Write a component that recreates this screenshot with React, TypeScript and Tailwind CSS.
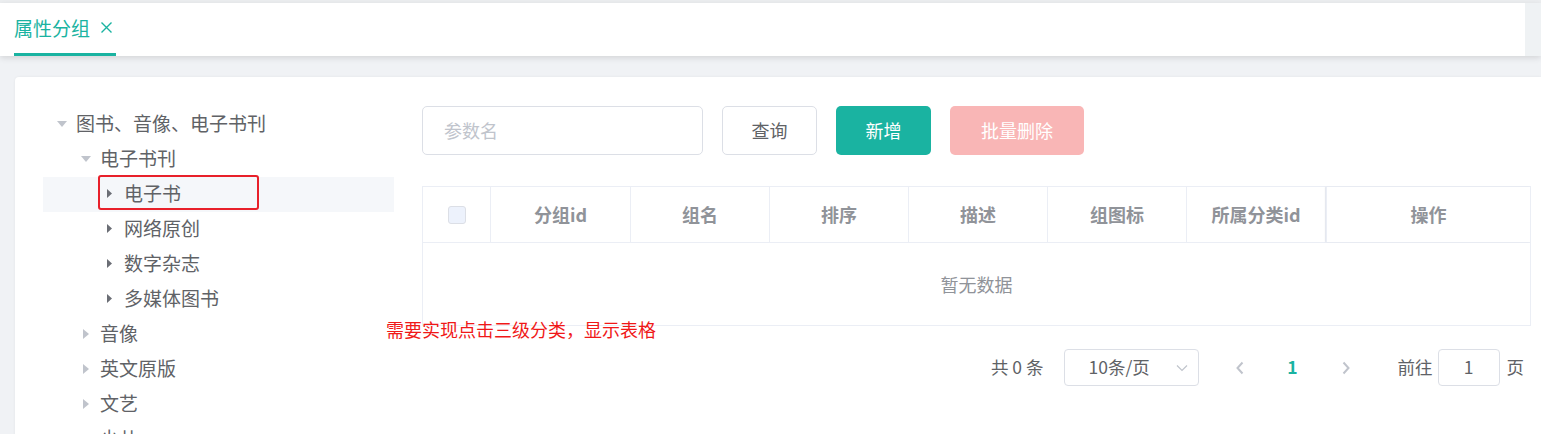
import React from "react";

const FONT = { fontFamily: '"Microsoft YaHei", "Noto Sans CJK SC", "Noto Sans", sans-serif' };

function CaretDown({ color = "#c0c4cc" }: { color?: string }) {
  return (
    <svg width="10" height="6" viewBox="0 0 10 6">
      <path d="M0 0 L10 0 L5 6 Z" fill={color} />
    </svg>
  );
}
function CaretRight({ color = "#c0c4cc", small = false }: { color?: string; small?: boolean }) {
  return small ? (
    <svg width="5" height="9" viewBox="0 0 5 9">
      <path d="M0 0 L5 4.5 L0 9 Z" fill={color} />
    </svg>
  ) : (
    <svg width="6" height="10" viewBox="0 0 6 10">
      <path d="M0 0 L6 5 L0 10 Z" fill={color} />
    </svg>
  );
}

type Node = { label: string; level: number; kind: "open" | "closed" | "leafish"; active?: boolean };

const nodes: Node[] = [
  { label: "图书、音像、电子书刊", level: 1, kind: "open" },
  { label: "电子书刊", level: 2, kind: "open" },
  { label: "电子书", level: 3, kind: "leafish", active: true },
  { label: "网络原创", level: 3, kind: "leafish" },
  { label: "数字杂志", level: 3, kind: "leafish" },
  { label: "多媒体图书", level: 3, kind: "leafish" },
  { label: "音像", level: 2, kind: "closed" },
  { label: "英文原版", level: 2, kind: "closed" },
  { label: "文艺", level: 2, kind: "closed" },
  { label: "少儿", level: 2, kind: "closed" },
];

function TreeRow({ n }: { n: Node }) {
  const indent = n.level === 1 ? "pl-[6px]" : n.level === 2 ? "pl-[30px]" : "pl-[54px]";
  return (
    <div className={`relative flex items-center h-[35px] ${indent} ${n.active ? "bg-[#f5f7fa]" : ""}`}>
      <div className="w-[25px] flex items-center justify-center shrink-0 mb-[2px]">
        {n.kind === "open" ? (
          <CaretDown />
        ) : n.kind === "closed" ? (
          <CaretRight />
        ) : (
          <CaretRight color="#6b6e75" small />
        )}
      </div>
      <span className="ml-[2px] mb-[4px] text-[19px] leading-none text-[#606266] whitespace-nowrap">{n.label}</span>
      {n.active && (
        <div className="absolute left-[55px] top-[-2px] w-[161px] h-[35px] border-2 border-[#e8202a] rounded-[3px]" />
      )}
    </div>
  );
}

const cols = [
  { w: "w-[68px]", label: "" },
  { w: "w-[140px]", label: "分组id" },
  { w: "w-[139px]", label: "组名" },
  { w: "w-[139px]", label: "排序" },
  { w: "w-[139px]", label: "描述" },
  { w: "w-[139px]", label: "组图标" },
  { w: "w-[139px]", label: "所属分类id" },
];

export default function App() {
  return (
    <div style={FONT} className="relative w-[1541px] h-[434px] overflow-hidden bg-[#f0f2f5]">
      {/* top strip */}
      <div className="h-[3px] bg-[#eceef0]" />
      {/* tab bar */}
      <div className="relative z-10 flex h-[53px] bg-white shadow-[0_2px_6px_rgba(0,0,0,0.12)]">
        <div className="flex-1 flex items-end pl-[14px]">
          <div className="flex flex-col">
            <div className="flex items-center h-[50px] pb-[2px]">
              <span className="text-[19px] leading-none text-[#1ab3a1]">属性分组</span>
              <svg className="ml-[10px]" width="13" height="13" viewBox="0 0 13 13">
                <path d="M1.5 1.5 L11.5 11.5 M11.5 1.5 L1.5 11.5" stroke="#1ab3a1" strokeWidth="1.4" />
              </svg>
            </div>
            <div className="h-[3px] w-[102px] bg-[#1ab3a1]" />
          </div>
        </div>
        <div className="w-[16px] bg-[#eff2f4]" />
      </div>

      {/* content */}
      <div className="pt-[21px] pl-[15px]">
        <div className="flex h-[400px] bg-white rounded-tl-[4px] shadow-[0_0_3px_rgba(0,0,0,0.06)]">
          {/* tree */}
          <div className="w-[351px] ml-[28px] pt-[30px] shrink-0">
            {nodes.map((n) => (
              <TreeRow key={n.label} n={n} />
            ))}
          </div>

          {/* right panel */}
          <div className="ml-[28px] w-[1109px] pt-[29px] shrink-0">
            <div className="flex items-center h-[49px]">
              <div className="w-[281px] h-[49px] border border-[#dcdfe6] rounded-[5px] flex items-center pl-[21px]">
                <span className="text-[18px] text-[#c0c4cc]">参数名</span>
              </div>
              <div className="ml-[19px] w-[95px] h-[49px] border border-[#dcdfe6] rounded-[5px] flex items-center justify-center text-[18px] text-[#606266]">
                查询
              </div>
              <div className="ml-[19px] w-[95px] h-[49px] rounded-[5px] bg-[#1ab3a1] flex items-center justify-center text-[18px] text-white">
                新增
              </div>
              <div className="ml-[19px] w-[134px] h-[49px] rounded-[5px] bg-[#f9b6b6] flex items-center justify-center text-[18px] text-white">
                批量删除
              </div>
            </div>

            {/* table */}
            <div className="mt-[31px] border border-[#ebeef5]">
              <div className="flex h-[56px] border-b border-[#ebeef5]">
                {cols.map((c, i) => (
                  <div
                    key={i}
                    className={`${c.w} shrink-0 flex items-center justify-center border-r border-[#ebeef5] text-[18px] font-bold text-[#909399]`}
                  >
                    {i === 0 ? (
                      <div className="w-[18px] h-[18px] rounded-[3px] border border-[#dcdfe6] bg-[#edf2fc]" />
                    ) : (
                      c.label
                    )}
                  </div>
                ))}
                <div className="flex-1 flex items-center justify-center border-l border-[#ebeef5] text-[18px] font-bold text-[#909399] shadow-[-1px_0_2px_rgba(0,0,0,0.04)]">
                  操作
                </div>
              </div>
              <div className="h-[82px] flex items-center justify-center text-[18px] text-[#909399]">暂无数据</div>
            </div>

            {/* pagination */}
            <div className="mt-[23px] flex items-center justify-end pr-[7px] h-[37px] text-[17.5px] text-[#606266]">
              <span className="whitespace-nowrap">共 0 条</span>
              <div className="ml-[20px] w-[135px] h-[37px] border border-[#dcdfe6] rounded-[4px] flex items-center pl-[24px] pr-[10px]">
                <span className="flex-1">10条/页</span>
                <svg width="12" height="8" viewBox="0 0 12 8">
                  <path d="M1 1.5 L6 6.5 L11 1.5" fill="none" stroke="#c0c4cc" strokeWidth="1.2" />
                </svg>
              </div>
              <div className="ml-[22px] w-[38px] h-[37px] flex items-center justify-center">
                <svg width="10" height="14" viewBox="0 0 10 14">
                  <path d="M7.5 1.5 L2.5 7 L7.5 12.5" fill="none" stroke="#c0c4cc" strokeWidth="2" />
                </svg>
              </div>
              <div className="ml-[15px] w-[38px] h-[37px] flex items-center justify-center font-bold text-[#1ab3a1]">1</div>
              <div className="ml-[15px] w-[38px] h-[37px] flex items-center justify-center">
                <svg width="10" height="14" viewBox="0 0 10 14">
                  <path d="M2.5 1.5 L7.5 7 L2.5 12.5" fill="none" stroke="#c0c4cc" strokeWidth="2" />
                </svg>
              </div>
              <span className="ml-[33px] whitespace-nowrap">前往</span>
              <div className="ml-[5px] w-[62px] h-[37px] border border-[#dcdfe6] rounded-[4px] flex items-center justify-center">
                1
              </div>
              <span className="ml-[7px]">页</span>
            </div>
          </div>
        </div>
      </div>

      {/* annotation */}
      <div className="absolute left-[386px] top-[318px] text-[18px] leading-[22px] text-[#f01818] whitespace-nowrap">
        需要实现点击三级分类，显示表格
      </div>
    </div>
  );
}
